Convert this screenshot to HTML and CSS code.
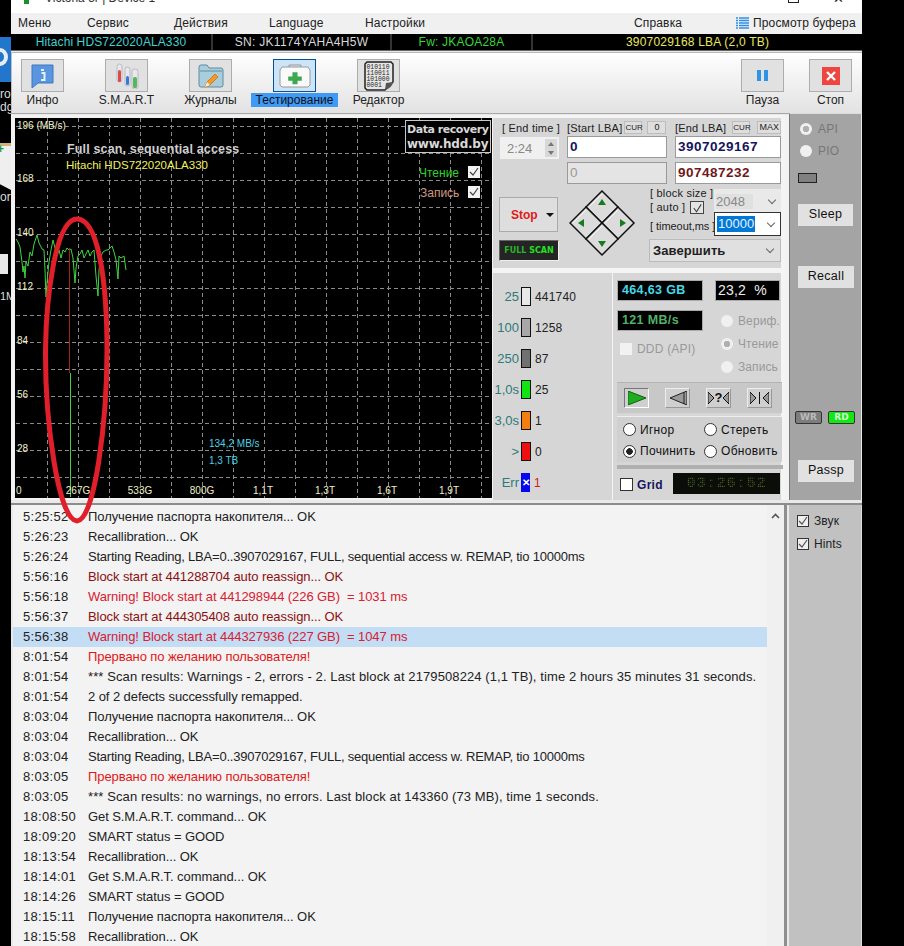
FILE: index.html
```html
<!DOCTYPE html>
<html lang="ru">
<head>
<meta charset="utf-8">
<title>Victoria 5r</title>
<link rel="stylesheet" href="styles.css">
</head>
<body>
<div class="desktop">
  <aside class="strip">
    <div class="d-blue"><span class="d-blue-o"></span></div>
    <div class="d-txt">ro<br>dg</div>
    <div class="d-doc"><span class="d-plus">+</span></div>
    <div class="d-txt d-txt2">or</div>
    <div class="d-white"></div>
    <div class="d-txt d-txt3">1M</div>
  </aside>
  <div class="window">
    <header class="titlebar">
      <span class="tb-icon"></span>
      <span class="tb-text">Victoria 5r | Device 1</span>
      <span class="tb-max"></span>
      <span class="tb-close">✕</span>
    </header>
    <nav class="menubar">
      <span class="m m1">Меню</span><span class="m m2">Сервис</span><span class="m m3">Действия</span><span class="m m4">Language</span><span class="m m5">Настройки</span>
      <span class="m m6">Справка</span>
      <svg class="buf-ico" width="13" height="12" viewBox="0 0 13 12"><path d="M0 1h2M3 1h10M0 3.500h2M3 3.500h10M0 6h2M3 6h10M0 8.500h2M3 8.500h10M0 11h2M3 11h10" stroke="#2f8fe6" stroke-width="1.400"/></svg>
      <span class="m m7">Просмотр буфера</span>
    </nav>
    <div class="infobar">
      <span class="ib ib1">Hitachi HDS722020ALA330</span>
      <span class="ib ib2">SN: JK1174YAHA4H5W</span>
      <span class="ib ib3">Fw: JKAOA28A</span>
      <span class="ib ib4">3907029168 LBA (2,0 TB)</span>
    </div>
    <div class="toolbar">
      <div class="tool">
        <div class="tool-btn">
          <svg width="24" height="26" viewBox="0 0 24 26"><path d="M1 2h21v18H7l-6 5z" fill="#5a96e0" stroke="#3d76c4"/><path d="M10 7h3M10.500 10h3v7M10 17h4.500" stroke="#e4f0ff" stroke-width="2" fill="none"/></svg>
        </div>
        <span class="tool-lbl">Инфо</span>
      </div>
      <div class="tool">
        <div class="tool-btn">
          <svg width="26" height="26" viewBox="0 0 26 26"><rect x="3" y="1" width="5" height="18" rx="2.500" fill="#e8e8ee" stroke="#b9b9c4"/><rect x="4" y="7" width="3" height="12" rx="1.500" fill="#e04848"/><rect x="11" y="4" width="5" height="19" rx="2.500" fill="#e8e8ee" stroke="#b9b9c4"/><rect x="12" y="13" width="3" height="9" rx="1.500" fill="#3a78d8"/><rect x="18" y="6" width="6" height="20" rx="2.500" fill="#e8e8ee" stroke="#b9b9c4"/><rect x="19" y="14" width="4" height="11" rx="1.500" fill="#55b85a"/></svg>
        </div>
        <span class="tool-lbl">S.M.A.R.T</span>
      </div>
      <div class="tool">
        <div class="tool-btn">
          <svg width="26" height="26" viewBox="0 0 26 26"><path d="M1 4q0-2 2-2h6l2 3h12q2 0 2 2v15q0 2-2 2H3q-2 0-2-2z" fill="#a9cddb" stroke="#5f8c9e"/><path d="M2 8h22" stroke="#5f8c9e"/><path d="M7 24l2-5 8-8 3 3-8 8z" fill="#f09a2e" stroke="#d87d18"/><path d="M7 24l2-5 3 3z" fill="#f5ebd7"/></svg>
        </div>
        <span class="tool-lbl">Журналы</span>
      </div>
      <div class="tool">
        <div class="tool-btn active">
          <svg width="32" height="24" viewBox="0 0 32 24"><path d="M10 3V1h12v2" fill="none" stroke="#999"/><path d="M3 3h26l2 3v15l-2 2H3l-2-2V6z" fill="#fafafa" stroke="#9a9a9a"/><path d="M13 7h6v5h5v5h-5v4h-6v-4H8v-5h5z" fill="#3ea850" transform="translate(2.400 2.400) scale(.85)"/></svg>
        </div>
        <span class="tool-lbl sel">Тестирование</span>
      </div>
      <div class="tool">
        <div class="tool-btn">
          <svg width="30" height="30" viewBox="0 0 30 30"><path d="M3 1h24l2 2v18l-8 8H3l-2-2V3z" fill="#e6e6e6" stroke="#222" stroke-width="1.500"/><path d="M21 29l1-7 7-1q-1 6-8 8z" fill="#555"/><text class="bin" x="2.500" y="7.500">010110</text><text class="bin" x="2.500" y="13.500">110011</text><text class="bin" x="2.500" y="19.500">101000</text><text class="bin" x="2.500" y="25.500">0001</text></svg>
        </div>
        <span class="tool-lbl">Редактор</span>
      </div>
      <div class="tool tool-push">
        <div class="tool-btn">
          <svg width="11" height="11" viewBox="0 0 11 11"><rect width="4" height="11" fill="#2f93e8"/><rect x="7" width="4" height="11" fill="#2f93e8"/></svg>
        </div>
        <span class="tool-lbl">Пауза</span>
      </div>
      <div class="tool tool-stop">
        <div class="tool-btn">
          <svg width="18" height="18" viewBox="0 0 18 18"><rect width="18" height="18" fill="#ee4640"/><path d="M5 5l8 8M13 5l-8 8" stroke="#fff" stroke-width="2.400"/></svg>
        </div>
        <span class="tool-lbl">Стоп</span>
      </div>
    </div>

    <div class="main">
      <section class="graph">
        <svg class="plot" width="477" height="380" viewBox="15 118 477 380">
          <rect x="15" y="118" width="477" height="380" fill="#000"/>
          <g class="grid-lines">
            <path d="M16 126.500H492M16 153.500H492M16 180.500H492M16 207.500H492M16 234.500H492M16 261.500H492M16 288.500H492M16 315.500H492M16 342.500H492M16 369.500H492M16 396.500H492M16 423.500H492M16 450.500H492M16 477.500H492"/>
            <path d="M47.500 118V498M78.500 118V498M109.500 118V498M140.500 118V498M171.500 118V498M202.500 118V498M233.500 118V498M264.500 118V498M295.500 118V498M326.500 118V498M357.500 118V498M388.500 118V498M419.500 118V498M450.500 118V498M481.500 118V498"/>
          </g>
          <polyline class="trace" points="16,239 18,242 20,247 22,262 23,272 24,266 25,278 26,262 28,266 30,252 32,256 34,244 37,235 39,243 42,249 44,250 45,270 46,297 47,282 49,262 51,250 53,240 55,248 57,256 59,250 61,258 63,250 65,252 67,248 69,250 71,249 73,258 75,283 76,268 78,256 80,254 82,250 84,258 86,254 88,250 90,256 92,252 94,250 96,276 98,296 99,270 101,256 103,252 106,250 108,250 110,248 112,246 114,252 116,260 118,279 119,256 121,258 124,256 126,270"/>
          <path class="bad-line" d="M69.500 248V373"/>
          <path class="scan-line" d="M70.500 373V497"/>
          <text class="ax" x="17" y="129">196 (MB/s)</text>
          <text class="ax" x="17" y="182">168</text>
          <text class="ax" x="17" y="236">140</text>
          <text class="ax" x="17" y="290">112</text>
          <text class="ax" x="17" y="344">84</text>
          <text class="ax" x="17" y="398">56</text>
          <text class="ax" x="17" y="452">28</text>
          <text class="ax" x="16" y="494">0</text>
          <text class="ax mid" x="78" y="494">267G</text>
          <text class="ax mid" x="140" y="494">533G</text>
          <text class="ax mid" x="202" y="494">800G</text>
          <text class="ax mid" x="263" y="494">1,1T</text>
          <text class="ax mid" x="325" y="494">1,3T</text>
          <text class="ax mid" x="387" y="494">1,6T</text>
          <text class="ax mid" x="449" y="494">1,9T</text>
          <text class="g-title" x="67" y="153">Full scan, sequential access</text>
          <text class="g-model" x="66" y="169">Hitachi HDS722020ALA330</text>
          <text class="g-cy" x="209" y="447">134,2 MB/s</text>
          <text class="g-cy" x="209" y="464">1,3 TB</text>
          <rect x="405.500" y="120.500" width="85" height="32" fill="#000" stroke="#c8c8c8"/>
          <text class="g-rec" x="407" y="133">Data recovery</text>
          <text class="g-www" x="407" y="148">www.hdd.by</text>
          <text class="g-read" x="419" y="177">Чтение</text>
          <text class="g-write" x="420" y="197">Запись</text>
          <rect x="468" y="166" width="12" height="12" fill="#f2f2f2"/>
          <path d="M470 172l3 3 5-7" fill="none" stroke="#444" stroke-width="1.200"/>
          <rect x="468" y="186" width="12" height="12" fill="#f2f2f2"/>
          <path d="M470 192l3 3 5-7" fill="none" stroke="#444" stroke-width="1.200"/>
        </svg>
      </section>

      <section class="controls">
        <div class="ctl-upper">
          <div class="lba-row">
            <div class="col-time">
              <span class="lab lab-time">[ End time ]</span>
              <div class="spin"><span class="spin-v">2:24</span><span class="spin-btns"><i class="up"></i><i class="dn"></i></span></div>
            </div>
            <div class="col-lba col-start">
              <div class="lab-row"><span class="lab">[Start LBA]</span><span class="mini m-cur">CUR</span><span class="mini m-zero">0</span></div>
              <div class="field navy">0</div>
              <div class="field off">0</div>
            </div>
            <div class="col-lba col-end">
              <div class="lab-row"><span class="lab">[End LBA]</span><span class="mini m-cur2">CUR</span><span class="mini m-max">MAX</span></div>
              <div class="field navy">3907029167</div>
              <div class="field maroon">907487232</div>
            </div>
          </div>
          <div class="act-row">
            <div class="col-stop">
              <div class="stop-btn"><span class="stop-t">Stop</span><i class="caret"></i></div>
              <div class="fullscan"><span class="fs1">FULL </span><span class="fs2">SCAN</span></div>
            </div>
            <svg class="pad" width="68" height="68" viewBox="0 0 68 68">
              <g stroke="#111" stroke-width="1.500" fill="#dcdcdc">
                <path d="M33 1l16 16-16 16-16-16z"/>
                <path d="M17 17l16 16-16 16L1 33z"/>
                <path d="M49 17l16 16-16 16-16-16z"/>
                <path d="M33 33l16 16-16 16-16-16z"/>
              </g>
              <g fill="none" stroke="#f6f6f6" stroke-width="1">
                <path d="M20 17L33 4M4 33L17 20M36 33L49 20M20 49L33 36"/>
              </g>
              <g fill="#167a1e">
                <path d="M33 9l4 6h-8z"/><path d="M9 33l6-4v8z"/><path d="M57 33l-6-4v8z"/><path d="M33 57l-4-6h8z"/>
              </g>
            </svg>
            <div class="col-opts">
              <div class="opt-grid">
                <div class="opt-labs">
                  <span class="lab l-bs">[ block size ]</span>
                  <span class="lab l-auto">[ auto ]<span class="chk-auto"><svg width="13" height="13" viewBox="0 0 13 13"><path d="M3 6l3 4 5-8" fill="none" stroke="#444" stroke-width="1.200"/></svg></span></span>
                  <span class="lab l-to">[ timeout,ms ]</span>
                </div>
                <div class="opt-sels">
                  <div class="sel-box dis"><span class="sel-in">2048</span><i class="chev"></i></div>
                  <div class="sel-box act"><span class="sel-mark">10000</span><i class="chev"></i></div>
                </div>
              </div>
              <div class="finish"><span>Завершить</span><i class="chev"></i></div>
            </div>
          </div>
        </div>
        <div class="ctl-lower">
          <div class="legend">
            <div class="lg"><span class="lg-k">25</span><i class="bar b1"></i><span class="lg-v">441740</span></div>
            <div class="lg"><span class="lg-k">100</span><i class="bar b2"></i><span class="lg-v">1258</span></div>
            <div class="lg"><span class="lg-k">250</span><i class="bar b3"></i><span class="lg-v">87</span></div>
            <div class="lg"><span class="lg-k">1,0s</span><i class="bar b4"></i><span class="lg-v">25</span></div>
            <div class="lg"><span class="lg-k">3,0s</span><i class="bar b5"></i><span class="lg-v">1</span></div>
            <div class="lg"><span class="lg-k">&gt;</span><i class="bar b6"></i><span class="lg-v">0</span></div>
            <div class="lg"><span class="lg-k">Err</span><i class="bar b7">✕</i><span class="lg-v red">1</span></div>
          </div>
          <div class="stats">
            <div class="st-row1">
              <div class="disp cyan">464,63 GB</div>
              <div class="disp pct">23,2 &nbsp;%</div>
            </div>
            <div class="st-row2">
              <div class="st-left">
                <div class="disp green">121 MB/s</div>
                <div class="ddd"><i class="box-off"></i><span>DDD (API)</span></div>
              </div>
              <div class="st-modes">
                <div class="md"><i class="rd"></i>Вериф.</div>
                <div class="md"><i class="rd on-g"></i>Чтение</div>
                <div class="md"><i class="rd"></i>Запись</div>
              </div>
            </div>
            <div class="transport">
              <span class="tr-btn tr-on"><svg width="18" height="14" viewBox="0 0 18 14"><path d="M0 0l18 7-18 7z" fill="#1dae1d" stroke="#145c14"/></svg></span>
              <span class="tr-btn"><svg width="18" height="14" viewBox="0 0 18 14"><path d="M18 0L1 7l17 7z" fill="#9a9a9a" stroke="#222"/><path d="M15 1v12" stroke="#222"/></svg></span>
              <span class="tr-btn tr-q"><svg width="6" height="12" viewBox="0 0 6 12"><path d="M0 0l6 6-6 6z" fill="#999" stroke="#111"/></svg><b>?</b><svg width="6" height="12" viewBox="0 0 6 12"><path d="M6 0L0 6l6 6z" fill="#999" stroke="#111"/></svg></span>
              <span class="tr-btn tr-q"><svg width="6" height="12" viewBox="0 0 6 12"><path d="M0 0l6 6-6 6z" fill="#999" stroke="#111"/></svg><i class="tr-bar"></i><svg width="6" height="12" viewBox="0 0 6 12"><path d="M6 0L0 6l6 6z" fill="#999" stroke="#111"/></svg></span>
            </div>
            <div class="modes">
              <div class="mo"><i class="rw"></i>Игнор</div>
              <div class="mo"><i class="rw"></i>Стереть</div>
              <div class="mo"><i class="rw on"></i>Починить</div>
              <div class="mo"><i class="rw"></i>Обновить</div>
            </div>
            <div class="thin"></div>
            <div class="st-bottom">
              <i class="grid-box"></i><b class="grid-t">Grid</b>
              <div class="clock">03:26:52</div>
            </div>
          </div>
        </div>
      </section>

      <aside class="side-top">
        <div class="sr"><i class="rd on-g"></i>API</div>
        <div class="sr"><i class="rd"></i>PIO</div>
        <i class="indicator"></i>
        <div class="s-btn s-sleep">Sleep</div>
        <div class="s-btn s-recall">Recall</div>
        <div class="wr-rd"><span class="wr">WR</span><span class="rdl">RD</span></div>
        <div class="s-btn s-passp">Passp</div>
      </aside>
    </div>

    <div class="bottom">
      <section class="log">
        <div class="rows">
          <div class="row"><span class="t">5:25:52</span><span>Получение паспорта накопителя... OK</span></div>
          <div class="row"><span class="t">5:26:23</span><span>Recallibration... OK</span></div>
          <div class="row tight"><span class="t">5:26:24</span><span>Starting Reading, LBA=0..3907029167, FULL, sequential access w. REMAP, tio 10000ms</span></div>
          <div class="row dk"><span class="t">5:56:16</span><span>Block start at 441288704 auto reassign... OK</span></div>
          <div class="row wn"><span class="t">5:56:18</span><span>Warning! Block start at 441298944 (226 GB) &nbsp;= 1031 ms</span></div>
          <div class="row dk"><span class="t">5:56:37</span><span>Block start at 444305408 auto reassign... OK</span></div>
          <div class="row wn cur"><span class="t">5:56:38</span><span>Warning! Block start at 444327936 (227 GB) &nbsp;= 1047 ms</span></div>
          <div class="row rd2"><span class="t">8:01:54</span><span>Прервано по желанию пользователя!</span></div>
          <div class="row wide"><span class="t">8:01:54</span><span>*** Scan results: Warnings - 2, errors - 2. Last block at 2179508224 (1,1 TB), time 2 hours 35 minutes 31 seconds.</span></div>
          <div class="row"><span class="t">8:01:54</span><span>2 of 2 defects successfully remapped.</span></div>
          <div class="row"><span class="t">8:03:04</span><span>Получение паспорта накопителя... OK</span></div>
          <div class="row"><span class="t">8:03:04</span><span>Recallibration... OK</span></div>
          <div class="row tight"><span class="t">8:03:04</span><span>Starting Reading, LBA=0..3907029167, FULL, sequential access w. REMAP, tio 10000ms</span></div>
          <div class="row rd2"><span class="t">8:03:05</span><span>Прервано по желанию пользователя!</span></div>
          <div class="row wide"><span class="t">8:03:05</span><span>*** Scan results: no warnings, no errors. Last block at 143360 (73 MB), time 1 seconds.</span></div>
          <div class="row"><span class="t">18:08:50</span><span>Get S.M.A.R.T. command... OK</span></div>
          <div class="row"><span class="t">18:09:20</span><span>SMART status = GOOD</span></div>
          <div class="row"><span class="t">18:13:54</span><span>Recallibration... OK</span></div>
          <div class="row"><span class="t">18:14:01</span><span>Get S.M.A.R.T. command... OK</span></div>
          <div class="row"><span class="t">18:14:26</span><span>SMART status = GOOD</span></div>
          <div class="row"><span class="t">18:15:11</span><span>Получение паспорта накопителя... OK</span></div>
          <div class="row"><span class="t">18:15:58</span><span>Recallibration... OK</span></div>
        </div>
        <div class="scroll"><svg width="9" height="6" viewBox="0 0 9 6"><path d="M1 5l3.500-3.500L8 5" fill="none" stroke="#555" stroke-width="1.600"/></svg></div>
      </section>
      <aside class="side-bot">
        <div class="ck"><i class="ck-box"><svg width="12" height="12" viewBox="0 0 12 12"><path d="M2 6l3 3 5-7" fill="none" stroke="#555" stroke-width="1.200"/></svg></i>Звук</div>
        <div class="ck"><i class="ck-box"><svg width="12" height="12" viewBox="0 0 12 12"><path d="M2 6l3 3 5-7" fill="none" stroke="#555" stroke-width="1.200"/></svg></i>Hints</div>
      </aside>
    </div>
  </div>
  <svg class="annot" width="904" height="946" viewBox="0 0 904 946"><path d="M77 219C55 219 46 300 45.500 350C45 420 58 520 77 521C95 520 107 420 107 350C107 290 100 219 77 219Z" fill="none" stroke="#e11f2b" stroke-width="5"/></svg>
</div>
</body>
</html>
```

FILE: styles.css
```css
* { box-sizing: border-box; }
html, body { margin: 0; padding: 0; background: #000; }
body { font: 12px "Liberation Sans", Arial, sans-serif; color: #111; }
i { display: block; font-style: normal; }
.desktop { position: relative; display: flex; width: 904px; height: 946px; overflow: hidden; background: #000; }

/* desktop scraps to the left of the window */
.strip { width: 11px; flex: none; color: #ddd; padding-top: 37px; overflow: hidden; }
.d-blue { height: 45px; background: #2277cc; overflow: hidden; }
.d-blue-o { display: block; width: 16px; height: 18px; margin: 11px 0 0 -8px; border: 4px solid #e8eef6; border-radius: 50%; }
.d-txt { font-size: 12px; line-height: 13px; margin-top: 6px; white-space: nowrap; }
.d-doc { height: 47px; margin-top: 29px; background: linear-gradient(#cdb57a 0 3px, #efefef 3px); clip-path: polygon(0 0, 100% 0, 100% 100%, 0 88%); color: #1d9a33; font-weight: bold; }
.d-plus { display: block; margin: 16px 0 0 -3px; line-height: 12px; }
.d-txt2 { margin-top: 1px; }
.d-white { width: 8px; height: 20px; margin-top: 50px; background: #e8e8e8; }
.d-txt3 { margin-top: 16px; margin-left: 0; font-size: 11px; }

.window { width: 851px; height: 946px; flex: none; display: flex; flex-direction: column; background: #e9e9e9; }

.titlebar { position: relative; height: 13px; background: #fff; overflow: hidden; flex: none; }
.tb-icon { position: absolute; left: 13px; top: 0; width: 5px; height: 4px; background: #1c8f2b; }
.tb-text { position: absolute; left: 34px; top: -9px; font-size: 12px; color: #333; }
.tb-max { position: absolute; left: 777px; top: -6px; width: 11px; height: 9px; border: 1px solid #222; }
.tb-close { position: absolute; left: 822px; top: -9px; font-size: 13px; color: #222; }

.menubar { height: 21px; display: flex; align-items: center; background: #f0f0f0; flex: none; position: relative; padding-bottom: 2px; font-size: 12px; letter-spacing: .15px; color: #222; }
.m1 { margin-left: 7px; }
.m { white-space: nowrap; }
.m1 { width: 69px; } .m2 { width: 87px; } .m3 { width: 95px; } .m4 { width: 96px; } .m5 { width: 269px; } .m6 { width: 102px; }
.buf-ico { margin-right: 4px; }

.infobar { height: 17px; flex: none; display: flex; background: #000; font-size: 12px; line-height: 17px; text-align: center; border-bottom: 1px solid #666; }
.ib { border-right: 2px solid #333; white-space: nowrap; }
.ib1 { width: 202px; color: #43d0d0; letter-spacing: .1px; }
.ib2 { width: 179px; color: #d8d8d8; letter-spacing: .3px; }
.ib3 { width: 141px; color: #37d437; letter-spacing: .2px; }
.ib4 { flex: 1; color: #e8e860; border: 0; letter-spacing: .2px; }

.toolbar { height: 62px; flex: none; margin-top: 1px; display: flex; padding: 6px 0 0 9px; background: linear-gradient(#fff, #e2e2e2); border-top: 1px solid #b8b8b8; border-bottom: 1px solid #a8a8a8; border-left: 1px solid #c0c0c0; }
.tool { width: 84px; display: flex; flex-direction: column; align-items: flex-start; }
.tool-btn { width: 43px; height: 33px; background: #e1e1e1; border: 1px solid #adadad; display: flex; align-items: center; justify-content: center; }
.tool-btn.active { background: #cce4f7; border-color: #0b4f8c; }
.tool-lbl { margin-top: 1px; width: 43px; text-align: center; white-space: nowrap; line-height: 14px; display: flex; justify-content: center; color: #222; }
.tool-lbl.sel { background: #3f9af6; width: 87px; margin-left: -22px; margin-right: -22px; line-height: 14px; height: 14px; color: #111; }
.bin { font: 6.400px "Liberation Mono", monospace; fill: #222; }
.tool-push { margin-left: auto; width: 68px; }
.tool-stop { width: 53px; }

.main { height: 385px; flex: none; display: flex; margin-top: 1px; background: #f2f2f2; padding-left: 4px; }
.graph { width: 477px; flex: none; border: 0; padding-top: 3px; }
.plot { display: block; }
.grid-lines path { stroke: #8a8a8a; stroke-width: 1; stroke-dasharray: 4 3; fill: none; }
.trace { fill: none; stroke: #3fd53f; stroke-width: 1; }
.bad-line { stroke: #a82018; stroke-width: 1; fill: none; }
.scan-line { stroke: #40d040; stroke-width: 1; fill: none; }
.ax { font: 10px "Liberation Sans", sans-serif; fill: #f0f0c8; }
.mid { text-anchor: middle; }
.g-title { font: bold 12.500px "Liberation Sans", sans-serif; fill: #d0d0d0; letter-spacing: .15px; }
.g-model { font: 11.500px "Liberation Sans", sans-serif; fill: #f0f060; }
.g-cy { font: 10px "Liberation Sans", sans-serif; fill: #4cd0e0; }
.g-rec { font: bold 11px "DejaVu Sans", sans-serif; fill: #d8d8d8; letter-spacing: -.45px; }
.g-www { font: bold 12px "DejaVu Sans", sans-serif; fill: #d8d8d8; letter-spacing: -.25px; }
.g-read { font: 12px "Liberation Sans", sans-serif; fill: #2fd02f; }
.g-write { font: 12px "Liberation Sans", sans-serif; fill: #d09a80; }

.controls { width: 293px; flex: none; padding-top: 3px; background: #f4f4f4; display: flex; flex-direction: column; }
.ctl-upper { height: 150px; margin-left: 1px; background: #d6d6d6; padding: 3px 0 0 7px; width: 288px; }
.lab { font-size: 11px; color: #222; white-space: nowrap; letter-spacing: .2px; }
.lba-row { display: flex; }
.col-time { width: 67px; }
.lab-time { display: block; margin: 1px 0 0 2px; line-height: 13px; }
.spin { width: 59px; height: 22px; margin-top: 2px; background: #f0f0f0; display: flex; align-items: center; justify-content: space-between; padding: 0 2px 0 7px; font-size: 13px; color: #888; }
.spin-btns { width: 12px; height: 18px; background: #d8d8d8; display: flex; flex-direction: column; justify-content: space-around; align-items: center; }
.up { border: 3px solid transparent; border-top: 0; border-bottom: 4px solid #777; }
.dn { border: 3px solid transparent; border-bottom: 0; border-top: 4px solid #777; }
.col-lba { display: flex; flex-direction: column; gap: 4px; }
.col-start { width: 108px; }
.col-end { width: 106px; }
.lab-row { display: flex; align-items: center; height: 13px; margin-bottom: -2px; }
.mini { height: 13px; background: #dedede; border: 1px solid #bdbdbd; font-size: 9px; line-height: 11px; text-align: center; color: #222; }
.m-cur { width: 18px; margin-left: 2px; font-size: 8px; }
.m-zero { width: 19px; margin-left: 5px; }
.m-cur2 { width: 18px; margin-left: 6px; font-size: 8px; }
.m-max { width: 25px; margin-left: 7px; font-size: 9px; }
.col-start .field { width: 100px; }
.col-end .field { width: 106px; }
.field { height: 22px; background: #fff; border: 1px solid #9a9a9a; font: bold 13.500px/20px "Liberation Sans", sans-serif; padding-left: 2px; letter-spacing: .5px; }
.navy { color: #14145c; }
.maroon { color: #701818; }
.off { background: #e4e4e4; color: #999; font-weight: normal; }

.act-row { display: flex; margin-top: 4px; margin-left: -1px; }
.col-stop { width: 70px; flex: none; padding-top: 9px; }
.stop-btn { width: 59px; height: 35px; background: #dedede; border: 1px solid #aaa; display: flex; align-items: center; gap: 8px; padding-left: 11px; color: #e01818; font-weight: bold; }
.caret { border: 4px solid transparent; border-top: 4px solid #111; border-bottom: 0; }
.fullscan { width: 60px; height: 21px; margin-top: 8px; background: #242424; border: 1px solid #666; border-right-color: #eee; border-bottom-color: #eee; font: bold 8px/19px "DejaVu Sans", sans-serif; text-align: center; color: #29b529; white-space: nowrap; }
.fs2 { color: #22e022; }
.pad { flex: none; margin-top: 2px; }
.col-opts { width: 132px; margin-left: 12px; flex: none; }
.opt-grid { display: flex; height: 48px; }
.opt-labs { width: 65px; display: flex; flex-direction: column; padding-left: 1px; }
.l-bs { line-height: 14px; margin-top: -2px; }
.l-auto { display: flex; align-items: center; gap: 5px; height: 14px; }
.l-to { margin-top: 6px; letter-spacing: -.05px; }
.chk-auto { display: inline-flex; width: 14px; height: 13px; background: #e4e4e4; border: 1px solid #444; }
.opt-sels { width: 67px; display: flex; flex-direction: column; margin-top: 1px; }
.sel-box { height: 24px; flex: none; display: flex; align-items: center; justify-content: space-between; padding: 0 6px 0 2px; font-size: 13px; }
.sel-box.dis { background: #e9e9e9; color: #888; }
.sel-in { background: #e0e0e0; padding-right: 8px; }
.sel-box.act { background: #fff; border: 1px solid #333; padding-left: 2px; margin-top: -1px; }
.sel-mark { background: #0078d7; color: #e8f2ff; padding: 0 1px; line-height: 16px; }
.chev { width: 6px; height: 6px; border-right: 1px solid #666; border-bottom: 1px solid #666; transform: rotate(45deg); margin-top: -3px; }
.finish { width: 132px; height: 23px; margin-top: 3px; background: #e0e0e0; border: 1px solid #bbb; display: flex; align-items: center; justify-content: space-between; padding: 0 7px 0 3px; font: bold 13px "Liberation Sans", sans-serif; letter-spacing: .1px; color: #222; }

.ctl-lower { flex: 1; display: flex; margin-top: 2px; margin-left: 1px; width: 288px; border-top: 3px solid #f4f4f4; background: #f4f4f4; min-height: 0; }
.legend { width: 119px; height: 227px; background: #d6d6d6; padding-top: 8px; flex: none; }
.lg { height: 31px; display: flex; align-items: center; }
.lg-k { width: 26px; text-align: right; color: #2d7a78; font-size: 13px; white-space: nowrap; }
.bar { width: 10px; height: 19px; margin-left: 2px; border: 1px solid #111; flex: none; }
.b1 { background: #e8e8e8; } .b2 { background: #a8a8a8; } .b3 { background: #707070; } .b4 { background: #12e412; }
.b5 { background: #f27f10; } .b6 { background: #ee1010; }
.b7 { background: #0808ee; color: #fff; border: 0; width: 9px; font-size: 10px; line-height: 19px; text-align: center; font-weight: bold; }
.lg-v { margin-left: 4px; color: #222; font-size: 12px; letter-spacing: .2px; }
.lg-v.red { color: #d81818; }

.stats { margin-left: 1px; width: 168px; height: 227px; background: #d6d6d6; padding: 7px 0 0 4px; }
.st-row1 { display: flex; justify-content: space-between; }
.disp { height: 21px; background: #000; border: 1px solid #aaa; font: bold 12.500px/19px "Liberation Sans", sans-serif; padding-left: 4px; letter-spacing: .35px; }
.cyan { width: 86px; color: #45d8e8; }
.green { width: 86px; color: #52b068; }
.pct { width: 65px; margin-right: 1px; color: #eee; font-weight: normal; font-size: 14px; letter-spacing: .2px; padding-left: 2px; }
.st-row2 { display: flex; height: 80px; }
.st-left { width: 104px; padding-top: 9px; }
.ddd { display: flex; align-items: center; gap: 5px; margin: 11px 0 0 3px; color: #999; letter-spacing: .2px; }
.box-off { width: 12px; height: 12px; background: #f2f2f2; }
.st-modes { padding-top: 8px; }
.md { height: 23px; display: flex; align-items: center; gap: 5px; color: #999; letter-spacing: .1px; white-space: nowrap; }
.rd { width: 12px; height: 12px; border-radius: 50%; background: #f0f0f0; flex: none; }
.on-g { background: radial-gradient(circle, #b0b0b0 0 3px, #f0f0f0 3.500px); }
.transport { width: 165px; height: 31px; background: #c8c8c8; border-top: 1px solid #b4b4b4; display: flex; align-items: center; gap: 16px; padding-left: 7px; margin-top: 1px; }
.tr-btn { width: 25px; height: 20px; background: #cfcfcf; border: 1px solid #eee; border-right-color: #999; border-bottom-color: #999; display: flex; align-items: center; justify-content: center; font-size: 13px; }
.tr-on { border-color: #777; border-right-color: #fff; border-bottom-color: #fff; }
.tr-q b { margin: 0 1px; line-height: 12px; }
.tr-bar { width: 1.500px; height: 12px; background: #111; margin: 0 3px; }
.modes { width: 165px; height: 46px; margin-top: 3px; background: #d0d0d0; border-top: 1px solid #eee; display: grid; grid-template-columns: 81px 1fr; align-items: center; padding: 2px 0 0 6px; font-size: 12px; }
.mo { display: flex; align-items: center; gap: 4px; white-space: nowrap; letter-spacing: .3px; }
.rw { width: 13px; height: 13px; border-radius: 50%; background: #fff; border: 1px solid #333; flex: none; }
.rw.on { background: radial-gradient(circle, #222 0 3px, #fff 3.500px); }
.thin { width: 166px; height: 4px; margin-top: 3px; background: #b0b0b0; }
.st-bottom { display: flex; align-items: center; padding: 4px 1px 0 3px; }
.grid-box { width: 13px; height: 13px; background: #fff; border: 1px solid #333; flex: none; margin-top: 2px; }
.grid-t { margin: 2px 0 0 4px; color: #16165e; font-size: 12px; letter-spacing: .3px; }
.clock { position: relative; width: 107px; height: 21px; margin-left: auto; background: #0b0e08; color: #4c5c22; font: bold 15px/21px "Liberation Mono", monospace; letter-spacing: 1px; text-align: center; }
.clock::after { content: ""; position: absolute; inset: 0; background: repeating-linear-gradient(90deg, rgba(11,14,8,.7) 0 1px, transparent 1px 2px), repeating-linear-gradient(0deg, rgba(11,14,8,.7) 0 1px, transparent 1px 2px); }

.side-top { width: 73px; margin-left: 4px; margin-top: -2px; height: 387px; flex: none; background: #a4a4a4; border-left: 1px solid #777; border-top: 1px solid #ddd; border-right: 1px solid #e8e8e8; display: flex; flex-direction: column; padding: 4px 0 0 7px; font-size: 12px; color: #777; }
.sr { display: flex; align-items: center; gap: 6px; height: 22px; margin-left: 3px; letter-spacing: .2px; }
.indicator { width: 19px; height: 10px; background: #808080; border: 1px solid #222; margin: 11px 0 0 1px; }
.s-btn { width: 56px; height: 22px; margin-left: 1px; background: #e1e1e1; color: #111; text-align: center; line-height: 21px; font-size: 12.500px; letter-spacing: .3px; flex: none; }
.s-sleep { margin-top: 21px; width: 55px; }
.s-recall { margin-top: 40px; }
.wr-rd { display: flex; gap: 6px; margin: 123px 0 0 -2px; }
.wr, .rdl { width: 27px; height: 13px; border: 1px solid #333; border-radius: 2px; font: bold 9px/11px "DejaVu Sans", sans-serif; text-align: center; }
.wr { background: #7d7d7d; color: #bbb; }
.rdl { background: #12e812; color: #d8ffd8; }
.s-passp { margin-top: 36px; }

.bottom { flex: 1; display: flex; min-height: 0; margin-top: 3px; border-top: 2px solid #8c8c8c; }
.log { width: 774px; flex: none; display: flex; margin-left: 2px; background: #f3f3f3; border-right: 3px solid #8f8f8f; overflow: hidden; }
.rows { width: 754px; flex: none; padding-top: 2px; }
.row { height: 20px; display: flex; line-height: 20px; white-space: nowrap; font-size: 13px; letter-spacing: -.08px; color: #222; }
.t { width: 75px; padding-left: 10px; flex: none; color: #222; letter-spacing: .3px; }
.tight { letter-spacing: -.22px; }
.wide { letter-spacing: .1px; }
.dk { color: #8c1010; }
.wn { color: #d82030; }
.rd2 { color: #e01818; }
.cur { background: #c3ddf5; }
.row .t { color: #222; }
.scroll { width: 18px; background: #f0f0f0; padding: 8px 0 0 4px; }
.scroll svg { display: block; }
.side-bot { width: 74px; margin-left: 2px; background: #c1c1c1; padding: 4px 0 0 8px; font-size: 12px; color: #222; border-right: 1px solid #ddd; }
.ck { display: flex; align-items: center; gap: 5px; height: 23px; letter-spacing: .1px; }
.ck-box { width: 12px; height: 12px; background: #eee; border: 1px solid #333; }
.ck-box svg { display: block; margin: -1px; }

.annot { position: absolute; left: 0; top: 0; pointer-events: none; }
```
